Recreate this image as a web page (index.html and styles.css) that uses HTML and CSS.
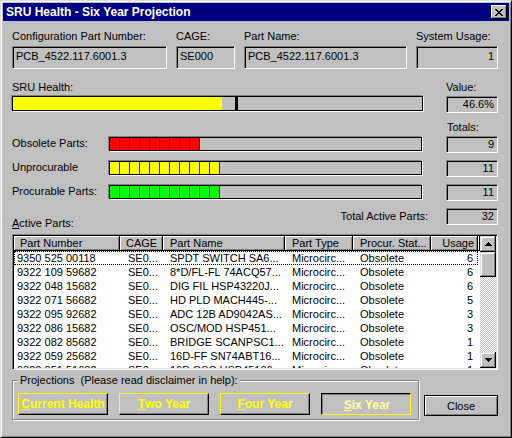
FILE: index.html
```html
<!DOCTYPE html>
<html>
<head>
<meta charset="utf-8">
<title>SRU Health - Six Year Projection</title>
<link rel="stylesheet" href="styles.css">
</head>
<body>
<div class="window">
  <div class="titlebar">
    <span class="title">SRU Health - Six Year Projection</span>
    <span class="tb-btn">
      <svg width="8" height="7" viewBox="0 0 8 7"><path d="M0 0h2v1H0zM6 0h2v1H6zM1 1h2v1H1zM5 1h2v1H5zM2 2h4v1H2zM3 3h2v1H3zM2 4h4v1H2zM1 5h2v1H1zM5 5h2v1H5zM0 6h2v1H0zM6 6h2v1H6z" fill="#000"/></svg>
    </span>
  </div>

  <div class="content">
    <div class="row-top">
      <div class="fgroup">
        <div class="lbl">Configuration Part Number:</div>
        <div class="field">PCB_4522.117.6001.3</div>
      </div>
      <div class="fgroup">
        <div class="lbl">CAGE:</div>
        <div class="field">SE000</div>
      </div>
      <div class="fgroup">
        <div class="lbl">Part Name:</div>
        <div class="field">PCB_4522.117.6001.3</div>
      </div>
      <div class="fgroup">
        <div class="lbl">System Usage:</div>
        <div class="field num">1</div>
      </div>
    </div>

    <div class="row-health">
      <div class="health-col">
        <div class="lbl">SRU Health:</div>
        <div class="hbar bar">
          <div class="hfill"></div>
          <div class="hmark"></div>
        </div>
      </div>
      <div class="value-col">
        <div class="lbl">Value:</div>
        <div class="vfield num">46.6%</div>
      </div>
    </div>

    <div class="totals-lbl lbl">Totals:</div>

    <div class="seg-grid">
      <div class="lbl">Obsolete Parts:</div>
      <div class="sbar bar">
        <i class="seg red"></i><i class="seg red"></i><i class="seg red"></i><i class="seg red"></i><i class="seg red"></i><i class="seg red"></i><i class="seg red"></i><i class="seg red"></i><i class="seg red"></i>
      </div>
      <div class="vfield num tot">9</div>

      <div class="lbl">Unprocurable</div>
      <div class="sbar bar">
        <i class="seg yel"></i><i class="seg yel"></i><i class="seg yel"></i><i class="seg yel"></i><i class="seg yel"></i><i class="seg yel"></i><i class="seg yel"></i><i class="seg yel"></i><i class="seg yel"></i><i class="seg yel"></i><i class="seg yel"></i>
      </div>
      <div class="vfield num tot">11</div>

      <div class="lbl">Procurable Parts:</div>
      <div class="sbar bar">
        <i class="seg grn"></i><i class="seg grn"></i><i class="seg grn"></i><i class="seg grn"></i><i class="seg grn"></i><i class="seg grn"></i><i class="seg grn"></i><i class="seg grn"></i><i class="seg grn"></i><i class="seg grn"></i><i class="seg grn"></i>
      </div>
      <div class="vfield num tot">11</div>

      <div class="lbl active-lbl"><u>A</u>ctive Parts:</div>
      <div class="lbl total-active">Total Active Parts:</div>
      <div class="vfield num tot">32</div>
    </div>

    <div class="listview">
      <div class="list-main">
        <div class="lv-head">
          <div class="hc">Part Number</div>
          <div class="hc">CAGE</div>
          <div class="hc">Part Name</div>
          <div class="hc">Part Type</div>
          <div class="hc">Procur. Stat...</div>
          <div class="hc r">Usage</div>
          <div class="hc filler"></div>
        </div>
        <div class="lv-row focus"><span class="c1">9350 525 00118</span><span>SE0...</span><span>SPDT SWITCH SA6...</span><span>Microcirc...</span><span>Obsolete</span><span class="r">6</span></div>
        <div class="lv-row"><span class="c1">9322 109 59682</span><span>SE0...</span><span>8*D/FL-FL 74ACQ57...</span><span>Microcirc...</span><span>Obsolete</span><span class="r">6</span></div>
        <div class="lv-row"><span class="c1">9322 048 15682</span><span>SE0...</span><span>DIG FIL HSP43220J...</span><span>Microcirc...</span><span>Obsolete</span><span class="r">6</span></div>
        <div class="lv-row"><span class="c1">9322 071 56682</span><span>SE0...</span><span>HD PLD MACH445-...</span><span>Microcirc...</span><span>Obsolete</span><span class="r">5</span></div>
        <div class="lv-row"><span class="c1">9322 095 92682</span><span>SE0...</span><span>ADC 12B AD9042AS...</span><span>Microcirc...</span><span>Obsolete</span><span class="r">3</span></div>
        <div class="lv-row"><span class="c1">9322 086 15682</span><span>SE0...</span><span>OSC/MOD HSP451...</span><span>Microcirc...</span><span>Obsolete</span><span class="r">3</span></div>
        <div class="lv-row"><span class="c1">9322 082 85682</span><span>SE0...</span><span>BRIDGE SCANPSC1...</span><span>Microcirc...</span><span>Obsolete</span><span class="r">1</span></div>
        <div class="lv-row"><span class="c1">9322 059 25682</span><span>SE0...</span><span>16D-FF SN74ABT16...</span><span>Microcirc...</span><span>Obsolete</span><span class="r">1</span></div>
        <div class="lv-row"><span class="c1">9322 051 51682</span><span>SE0...</span><span>16B OSC HSP45106...</span><span>Microcirc...</span><span>Obsolete</span><span class="r">1</span></div>
      </div>
      <div class="vscroll">
        <div class="sb-btn"><svg width="7" height="4" viewBox="0 0 7 4"><path d="M3 0h1v1h1v1h1v1h1v1H0V3h1V2h1V1h1z" fill="#000"/></svg></div>
        <div class="sb-thumb"></div>
        <div class="sb-track"></div>
        <div class="sb-btn"><svg width="7" height="4" viewBox="0 0 7 4"><path d="M0 0h7v1H6v1H5v1H4v1H3V3H2V2H1V1H0z" fill="#000"/></svg></div>
      </div>
    </div>

    <div class="row-bottom">
      <fieldset class="proj">
        <legend>Projections&nbsp; (Please read disclaimer in help):</legend>
        <div class="proj-btns">
          <div class="pbtn"><u>C</u>urrent Health</div>
          <div class="pbtn"><u>T</u>wo Year</div>
          <div class="pbtn"><u>F</u>our Year</div>
          <div class="pbtn pressed"><span><u>S</u>ix Year</span></div>
        </div>
      </fieldset>
      <div class="close-btn">Close</div>
    </div>
  </div>
</div>
</body>
</html>
```

FILE: styles.css
```css
* { box-sizing: border-box; }
html, body { margin: 0; padding: 0; }
body {
  width: 512px;
  height: 438px;
  overflow: hidden;
  background: #c0c0c0;
  font-family: "Liberation Sans", Arial, sans-serif;
  font-size: 11px;
  color: #000;
}
.window {
  width: 512px;
  height: 438px;
  border: 1px solid;
  border-color: #dfdfdf #000 #000 #dfdfdf;
  box-shadow: inset 1px 1px #fff, inset -1px -1px #808080;
  padding: 2px;
  display: flex;
  flex-direction: column;
}
.titlebar {
  height: 18px;
  flex: none;
  background: #000080;
  color: #fff;
  display: flex;
  align-items: center;
  justify-content: space-between;
  padding: 0 2px 0 3px;
}
.title { font-weight: bold; font-size: 12px; line-height: 18px; white-space: nowrap; }
.tb-btn {
  width: 16px;
  height: 14px;
  background: #c0c0c0;
  box-shadow: inset -1px -1px #000, inset 1px 1px #fff, inset -2px -2px #808080;
  display: flex;
  align-items: center;
  justify-content: center;
}
.tb-btn svg { display: block; }

.content { padding: 9px 11px 0 9px; }
.lbl { line-height: 13px; white-space: nowrap; }

.row-top {
  display: grid;
  grid-template-columns: 155px 59px 163px 82px;
  column-gap: 9px;
}
.field {
  height: 23px;
  margin-top: 3px;
  border: 1px solid;
  border-color: #808080 #fff #fff #808080;
  box-shadow: inset 1px 1px #000;
  padding: 3px 3px 0 3px;
  line-height: 13px;
  white-space: nowrap;
  overflow: hidden;
}
.num { text-align: right; }

.row-health {
  display: flex;
  margin-top: 12px;
}
.health-col { width: 411px; }
.value-col { width: 52px; margin-left: auto; }
.bar {
  border: 1px solid #000;
  box-shadow: -1px -1px 0 #808080, 1px 1px 0 #fff;
  display: flex;
}
.hbar { height: 15px; margin-top: 2px; }
.hfill { width: 209px; background: #ffff00; }
.hmark { width: 3px; margin-left: 13px; background: #000; }
.vfield {
  height: 17px;
  margin-top: 2px;
  border: 1px solid;
  border-color: #808080 #fff #fff #808080;
  box-shadow: inset 1px 1px #000;
  padding: 0 3px;
  line-height: 15px;
}

.totals-lbl { margin: 8px 0 0 435px; }

.seg-grid {
  display: grid;
  grid-template-columns: 97px 313px 1fr 52px;
  grid-template-rows: 17px 17px 17px 22px;
  row-gap: 7px;
  margin-top: 2px;
}
.seg-grid .lbl { align-self: start; margin-top: 1px; }
.seg-grid .vfield.tot { margin-top: 0; grid-column: 4; align-self: start; }
.sbar { height: 14px; margin-top: 1px; align-self: start; }
.seg { display: block; width: 10px; height: 100%; border-right: 1px solid #202020; }
.seg.red { background: #ff0000; }
.seg.yel { background: #ffff00; }
.seg.grn { background: #00ff00; }
.seg-grid .active-lbl { align-self: end; margin: 0; }
.seg-grid .total-active {
  grid-column: 2 / 4;
  text-align: right;
  padding-right: 18px;
  line-height: 17px;
  margin: 0;
}

.listview {
  margin-top: 4px;
  height: 136px;
  border: 1px solid;
  border-color: #808080 #fff #fff #808080;
  box-shadow: inset 1px 1px #000, inset -1px -1px #dfdfdf;
  padding: 1px;
  display: flex;
}
.list-main {
  flex: 1;
  background: #fff;
  overflow: hidden;
}
.lv-head {
  display: grid;
  grid-template-columns: 106px 43px 122px 68px 78px 47px 2px;
  height: 15px;
}
.hc {
  background: #c0c0c0;
  box-shadow: inset -1px -1px #000, inset 1px 1px #fff, inset -2px -2px #808080;
  line-height: 15px;
  padding-left: 6px;
  white-space: nowrap;
  overflow: hidden;
}
.hc:nth-child(n+3) { padding-left: 7px; }
.hc.r { text-align: right; padding: 0 4px 0 0; }
.hc.filler { padding: 0; }
.lv-row {
  display: grid;
  grid-template-columns: 106px 43px 122px 68px 78px 47px;
  width: 464px;
  height: 14px;
  line-height: 14px;
  white-space: nowrap;
}
.lv-row span { padding-left: 7px; overflow: hidden; }
.lv-row span:nth-child(2) { padding-left: 8px; }
.lv-row .c1 { padding-left: 3px; }
.lv-row .r { text-align: right; padding: 0 5px 0 0; }
.lv-row.focus { outline: 1px dotted #000; outline-offset: -1px; }

.vscroll {
  width: 16px;
  display: flex;
  flex-direction: column;
}
.sb-btn, .sb-thumb {
  background: #c0c0c0;
  box-shadow: inset -1px -1px #000, inset 1px 1px #dfdfdf, inset -2px -2px #808080, inset 2px 2px #fff;
}
.sb-btn {
  height: 16px;
  display: flex;
  align-items: center;
  justify-content: center;
}
.sb-btn svg { display: block; }
.sb-thumb { height: 25px; }
.sb-track {
  flex: 1;
  background-image: repeating-conic-gradient(#fff 0 25%, #c0c0c0 0 50%);
  background-size: 2px 2px;
}

.row-bottom {
  display: flex;
  margin-top: 4px;
}
.proj {
  width: 406px;
  margin: 0;
  padding: 6px 7px 4px 5px;
  border: 1px solid #808080;
  box-shadow: 1px 1px 0 #fff, inset 1px 1px 0 #fff;
}
.proj legend {
  padding: 0 2px;
  line-height: 13px;
  background: #c0c0c0;
  white-space: nowrap;
}
.proj-btns {
  display: flex;
  gap: 11px;
}
.pbtn {
  width: 90px;
  height: 22px;
  border: 1px solid;
  border-color: #ffff00 #000 #000 #ffff00;
  box-shadow: inset -1px -1px #808080;
  color: #ffff00;
  font-weight: bold;
  font-size: 12px;
  display: flex;
  align-items: center;
  justify-content: center;
  white-space: nowrap;
}
.pbtn.pressed {
  border-color: #000 #ffff00 #ffff00 #000;
  box-shadow: inset 1px 1px #808080;
  color: #ffff99;
}
.pbtn.pressed span { position: relative; left: 1px; top: 1px; }
.close-btn {
  width: 74px;
  height: 21px;
  margin: 0 0 4px 5px;
  align-self: flex-end;
  border: 1px solid #000;
  box-shadow: inset 1px 1px #fff, inset -1px -1px #808080;
  display: flex;
  align-items: center;
  justify-content: center;
}
```
